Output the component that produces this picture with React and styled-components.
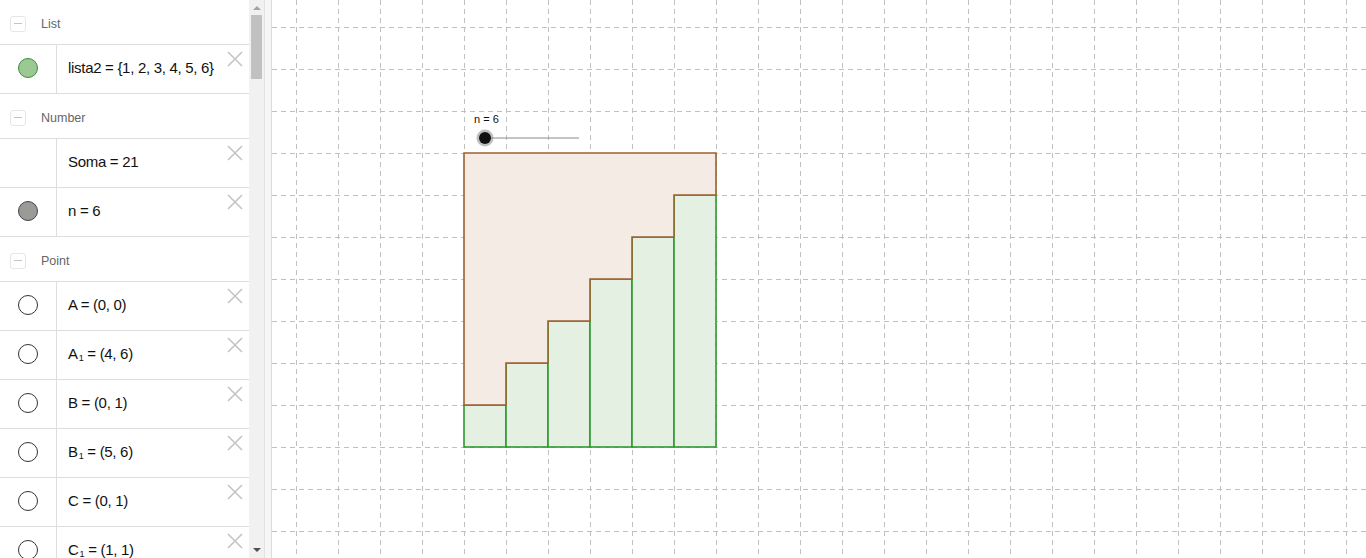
import React from 'react';
import styled, { createGlobalStyle } from 'styled-components';

const Global = createGlobalStyle`
  html, body {
    margin: 0;
    padding: 0;
    background: #fff;
    overflow: hidden;
  }
  body {
    font-family: "Liberation Sans", Arial, sans-serif;
  }
`;

const Page = styled.div`
  display: flex;
  flex-direction: row;
  width: 1366px;
  height: 558px;
  overflow: hidden;
`;

const Panel = styled.div`
  width: 249px;
  height: 558px;
  overflow: hidden;
  background: #fff;
  flex-shrink: 0;
`;

const Header = styled.div`
  display: flex;
  align-items: center;
  padding-top: 3px;
  box-sizing: border-box;
  height: 45px;
  border-bottom: 1px solid #dedede;
`;

const Toggle = styled.div`
  width: 14px;
  height: 14px;
  margin-left: 10px;
  margin-right: 15px;
  border: 1px solid #e6e6e6;
  border-radius: 3px;
  display: flex;
  align-items: center;
  justify-content: center;
  &::after {
    content: '';
    width: 8px;
    height: 1px;
    background: #c4c4c4;
  }
`;

const HeaderLabel = styled.span`
  font-size: 12.5px;
  color: #666;
`;

const Row = styled.div`
  position: relative;
  display: flex;
  height: 48px;
  border-bottom: 1px solid #dedede;
`;

const Marble = styled.div`
  width: 57px;
  flex-shrink: 0;
  border-right: 1px solid #dedede;
  display: flex;
  align-items: center;
  justify-content: center;
  padding-bottom: 2px;
  box-sizing: border-box;
  &::after {
    content: '';
    display: ${(p) => (p.$kind ? 'block' : 'none')};
    width: 18px;
    height: 18px;
    border-radius: 50%;
    background: ${(p) =>
      p.$kind === 'green' ? '#9bc994' : p.$kind === 'grey' ? '#9a9a97' : '#fff'};
    border: 1px solid
      ${(p) => (p.$kind === 'green' ? '#3f8b3a' : p.$kind === 'grey' ? '#444' : '#333')};
  }
`;

const Formula = styled.div`
  display: flex;
  align-items: center;
  padding-left: 11px;
  padding-bottom: 4px;
  font-size: 15px;
  letter-spacing: -0.3px;
  color: #111;
  white-space: pre;
`;

const Sub = styled.span`
  font-size: 9px;
  position: relative;
  top: 2px;
  margin-left: 1px;
`;

const Delete = styled.div`
  position: absolute;
  top: 6px;
  right: 6px;
  width: 16px;
  height: 16px;
`;

const Scrollbar = styled.div`
  width: 15px;
  height: 558px;
  flex-shrink: 0;
  background: #f1f1f1;
  display: flex;
  flex-direction: column;
  align-items: center;
`;

const Arrow = styled.div`
  width: 0;
  height: 0;
  border-left: 4px solid transparent;
  border-right: 4px solid transparent;
  ${(p) =>
    p.$down
      ? 'border-top: 4px solid #505050; margin-top: auto; margin-bottom: 6px;'
      : 'border-bottom: 4px solid #a3a3a3; margin-top: 6px;'}
`;

const Thumb = styled.div`
  width: 11px;
  height: 64px;
  margin-top: 5px;
  background: #c1c1c1;
`;

const Splitter = styled.div`
  width: 6px;
  height: 558px;
  flex-shrink: 0;
  background: #f6f6f6;
  border-left: 1px solid #e2e2e2;
  border-right: 1px solid #dcdcdc;
`;

const Canvas = styled.div`
  position: relative;
  flex: 1;
  height: 558px;
  background: #fff;
`;

const X = () => (
  <svg width="16" height="16" viewBox="0 0 16 16">
    <path d="M1 1 L15 15 M15 1 L1 15" stroke="#c4c4c4" strokeWidth="1.6" fill="none" />
  </svg>
);

const items = [
  { section: 'List' },
  { kind: 'green', text: 'lista2 = {1, 2, 3, 4, 5, 6}' },
  { section: 'Number' },
  { kind: null, text: 'Soma = 21' },
  { kind: 'grey', text: 'n = 6' },
  { section: 'Point' },
  { kind: 'white', name: 'A', text: ' = (0, 0)' },
  { kind: 'white', name: 'A', sub: '1', text: ' = (4, 6)' },
  { kind: 'white', name: 'B', text: ' = (0, 1)' },
  { kind: 'white', name: 'B', sub: '1', text: ' = (5, 6)' },
  { kind: 'white', name: 'C', text: ' = (0, 1)' },
  { kind: 'white', name: 'C', sub: '1', text: ' = (1, 1)' },
];

// canvas coordinates: canvas begins at page x = 272
const OX = 464 - 272;
const OY = 447;
const U = 42;

const Graph = () => {
  const vx = [];
  for (let x = 24; x < 1100; x += U) vx.push(x + 0.5);
  const hy = [];
  for (let y = 27; y < 558; y += U) hy.push(y + 0.5);

  const bars = [1, 2, 3, 4, 5, 6].map((i) => (
    <rect
      key={i}
      x={OX + U * (i - 1)}
      y={OY - U * i}
      width={U}
      height={U * i}
      fill="#e4f0e2"
      stroke="#2f9a2f"
      strokeWidth="1.6"
    />
  ));

  const top = OY - 7 * U;
  const pts = [[OX, top], [OX + 6 * U, top]];
  for (let i = 6; i >= 1; i--) {
    pts.push([OX + i * U, OY - i * U]);
    pts.push([OX + (i - 1) * U, OY - i * U]);
  }

  return (
    <svg width="1094" height="558" style={{ display: 'block' }}>
      <g stroke="#c0c0c0" strokeWidth="1" strokeDasharray="5 4">
        {vx.map((x) => (
          <line key={'v' + x} x1={x} y1={0} x2={x} y2={558} />
        ))}
        {hy.map((y) => (
          <line key={'h' + y} x1={0} y1={y} x2={1094} y2={y} />
        ))}
      </g>
      {bars}
      <polygon
        points={pts.map((p) => p.join(',')).join(' ')}
        fill="#f4ebe5"
        stroke="#9a6230"
        strokeWidth="1.6"
      />
      <line x1={213} y1={138} x2={307} y2={138} stroke="#8a8a8a" strokeWidth="1" />
      <circle cx={213} cy={138} r={8.5} fill="#8a8a8a" opacity="0.55" />
      <circle cx={213} cy={138} r={6} fill="#111" />
      <text x={202} y={123} fontSize="11" fontFamily="Liberation Sans, Arial, sans-serif" fill="#111">
        n = 6
      </text>
    </svg>
  );
};

export default function App() {
  return (
    <Page>
      <Global />
      <Panel>
        {items.map((it, i) =>
          it.section ? (
            <Header key={i}>
              <Toggle />
              <HeaderLabel>{it.section}</HeaderLabel>
            </Header>
          ) : (
            <Row key={i}>
              <Marble $kind={it.kind} />
              <Formula>
                <span>
                  {it.name}
                  {it.sub && <Sub>{it.sub}</Sub>}
                  {it.text}
                </span>
              </Formula>
              <Delete>
                <X />
              </Delete>
            </Row>
          )
        )}
      </Panel>
      <Scrollbar>
        <Arrow />
        <Thumb />
        <Arrow $down />
      </Scrollbar>
      <Splitter />
      <Canvas>
        <Graph />
      </Canvas>
    </Page>
  );
}
